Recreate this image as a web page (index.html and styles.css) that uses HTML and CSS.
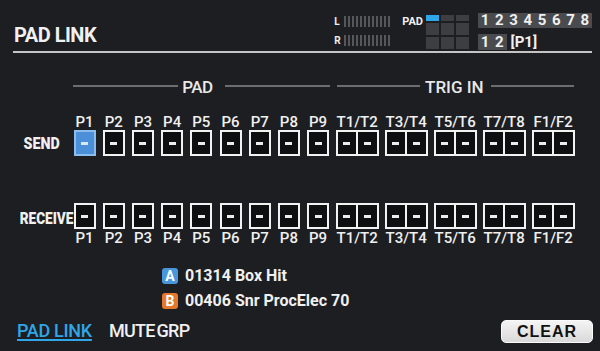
FILE: index.html
```html
<!DOCTYPE html>
<html lang="en">
<head>
    <meta charset="UTF-8">
    <meta name="viewport" content="width=device-width, initial-scale=1.0">
    <title>PAD LINK</title>
    <link rel="stylesheet" href="styles.css">
</head>
<body>
<div class="screen">
    <!-- Title bar with level meters and pad/bank status -->
    <header class="top-bar">
        <h1 class="title">PAD LINK</h1>
        <div class="status">
            <div class="meters">
                <div class="meter"><span>L</span><i class="ticks"></i></div>
                <div class="meter"><span>R</span><i class="ticks"></i></div>
            </div>
            <div class="pad-label">PAD</div>
            <div class="pad-map">
                <b class="on"></b><b></b><b></b>
                <b></b><b></b><b></b>
                <b></b><b></b><b></b>
            </div>
            <div class="banks">
                <div class="bank-row">
                    <span>1</span><span>2</span><span>3</span><span>4</span>
                    <span>5</span><span>6</span><span>7</span><span>8</span>
                </div>
                <div class="bank-sub">
                    <div class="bank-row"><span>1</span><span>2</span></div>
                    <span class="cur">[P1]</span>
                </div>
            </div>
        </div>
    </header>

    <!-- Send / receive link table -->
    <main class="link-table">
        <div class="sections">
            <div class="section pad"><span>PAD</span></div>
            <div class="section trig"><span>TRIG IN</span></div>
        </div>

        <div class="row names top">
            <div></div>
            <div>P1</div><div>P2</div><div>P3</div><div>P4</div><div>P5</div>
            <div>P6</div><div>P7</div><div>P8</div><div>P9</div>
            <div>T1/T2</div><div>T3/T4</div><div>T5/T6</div><div>T7/T8</div><div>F1/F2</div>
        </div>

        <div class="row cells send">
            <div class="row-name"><span>SEND</span></div>
            <div class="box on"><span></span></div>
            <div class="box"><span></span></div>
            <div class="box"><span></span></div>
            <div class="box"><span></span></div>
            <div class="box"><span></span></div>
            <div class="box"><span></span></div>
            <div class="box"><span></span></div>
            <div class="box"><span></span></div>
            <div class="box"><span></span></div>
            <div class="box pair"><span></span><span></span></div>
            <div class="box pair"><span></span><span></span></div>
            <div class="box pair"><span></span><span></span></div>
            <div class="box pair"><span></span><span></span></div>
            <div class="box pair"><span></span><span></span></div>
        </div>

        <div class="row cells receive">
            <div class="row-name"><span>RECEIVE</span></div>
            <div class="box"><span></span></div>
            <div class="box"><span></span></div>
            <div class="box"><span></span></div>
            <div class="box"><span></span></div>
            <div class="box"><span></span></div>
            <div class="box"><span></span></div>
            <div class="box"><span></span></div>
            <div class="box"><span></span></div>
            <div class="box"><span></span></div>
            <div class="box pair"><span></span><span></span></div>
            <div class="box pair"><span></span><span></span></div>
            <div class="box pair"><span></span><span></span></div>
            <div class="box pair"><span></span><span></span></div>
            <div class="box pair"><span></span><span></span></div>
        </div>

        <div class="row names bottom">
            <div></div>
            <div>P1</div><div>P2</div><div>P3</div><div>P4</div><div>P5</div>
            <div>P6</div><div>P7</div><div>P8</div><div>P9</div>
            <div>T1/T2</div><div>T3/T4</div><div>T5/T6</div><div>T7/T8</div><div>F1/F2</div>
        </div>
    </main>

    <!-- Instruments on the current pad -->
    <section class="samples">
        <div class="sample"><span class="tag a">A</span>01314 Box Hit</div>
        <div class="sample"><span class="tag b">B</span>00406 Snr ProcElec 70</div>
    </section>

    <footer class="bottom-bar">
        <span class="tab active">PAD LINK</span>
        <span class="tab">MUTE GRP</span>
        <button class="clear">CLEAR</button>
    </footer>
</div>
</body>
</html>
```

FILE: styles.css
```css
body {
    margin: 0;
    background: #1c1e22;
    font-family: Roboto, "Liberation Sans", sans-serif;
    color: #f0f0f0;
}

.screen {
    width: 600px;
    height: 351px;
    overflow: hidden;
}

/* title bar */
.top-bar {
    display: flex;
    height: 51px;
    margin: 0 8px 0 13px;
    border-bottom: 2px solid #c4c4c4;
}

.title {
    margin: 0;
    padding: 23px 0 0 1px;
    font-size: 20px;
    line-height: 24px;
    font-weight: 700;
    letter-spacing: -0.5px;
}

.status {
    margin-left: auto;
    display: flex;
    align-items: flex-start;
    padding-top: 13px;
}

.meters {
    display: flex;
    flex-direction: column;
    gap: 8px;
    margin-top: 3px;
}

.meter {
    display: flex;
    align-items: center;
    height: 11px;
}

.meter span {
    width: 10px;
    font-size: 10px;
    font-weight: 700;
    line-height: 11px;
}

.ticks {
    width: 46px;
    height: 11px;
    background: repeating-linear-gradient(90deg, #55575b 0 2px, transparent 2px 4px);
}

.pad-label {
    margin: 3px 0 0 12px;
    font-size: 11px;
    font-weight: 700;
    line-height: 12px;
}

.pad-map {
    display: grid;
    grid-template-columns: repeat(3, 13px);
    grid-template-rows: 6px 12px 12px;
    gap: 2px;
    margin: 2px 0 0 3px;
}

.pad-map b {
    background: #3c3e42;
}

.pad-map .on {
    background: #2ea6ea;
}

.banks {
    margin-left: 9px;
}

.bank-row {
    display: flex;
    background: #4a4b4f;
}

.bank-row span {
    width: 14.25px;
    text-align: center;
    font-size: 15px;
    font-weight: 700;
    line-height: 15px;
}

.bank-sub {
    display: flex;
    align-items: center;
    margin-top: 6px;
}

.bank-sub .bank-row span {
    line-height: 16px;
}

.cur {
    margin-left: 4px;
    font-size: 15px;
    font-weight: 700;
    line-height: 16px;
}

/* link table */
.link-table {
    margin: 24px 0 0 13px;
}

.sections {
    display: grid;
    grid-template-columns: 57px 262.8px 245px;
    height: 20px;
}

.section {
    display: flex;
    align-items: center;
    font-size: 17px;
    font-weight: 500;
    line-height: 20px;
    color: #e8e8e8;
}

.section::before, .section::after {
    content: "";
    flex: 1;
    height: 2px;
    margin-bottom: 3px;
    background: #6b6d71;
}

.section.pad {
    grid-column: 2;
    padding: 0 3px;
}

.section.pad span {
    margin: 0 12px 0 4px;
    letter-spacing: -0.5px;
}

.section.trig {
    grid-column: 3;
    padding: 0 4px;
}

.section.trig span {
    margin: 0 7px 0 5px;
}

.row {
    display: grid;
    grid-template-columns: 57px repeat(9, 29.2px) repeat(5, 49px);
    justify-items: center;
}

.names {
    font-size: 15px;
    font-weight: 500;
    line-height: 16px;
    color: #f0f0f0;
}

.names.top {
    margin-top: 17px;
}

.names.bottom {
    line-height: 18px;
}

.cells {
    height: 26px;
}

.cells.receive {
    margin-top: 47px;
}

.row-name {
    justify-self: stretch;
    text-align: center;
    font-size: 17px;
    font-weight: 900;
    line-height: 26px;
}

.row-name span {
    display: inline-block;
    transform: scaleX(.84);
}

.receive .row-name {
    padding-right: 3px;
    line-height: 30px;
}

.receive .row-name span {
    transform: scaleX(.8);
}

.box {
    display: flex;
    width: 22px;
    height: 26px;
    box-sizing: border-box;
    border: 2px solid #f2f2f2;
    background: #0e0f11;
}

.box.pair {
    width: 43px;
}

.box span {
    flex: 1;
    display: flex;
    align-items: center;
    justify-content: center;
}

.box span + span {
    border-left: 2px solid #f2f2f2;
}

.box span::before {
    content: "";
    width: 7px;
    height: 3px;
    background: #ececec;
}

.box.on {
    background: #4a8fd8;
    border-color: #8bbdee;
}

.box.on span::before {
    background: #d6e7f8;
}

/* sample names */
.samples {
    display: flex;
    flex-direction: column;
    gap: 8px;
    margin: 20px 0 0 162px;
}

.sample {
    display: flex;
    align-items: center;
    gap: 7px;
    height: 17px;
    font-size: 16px;
    font-weight: 700;
    line-height: 17px;
}

.tag {
    width: 16px;
    height: 16px;
    border-radius: 3px;
    font-size: 14px;
    line-height: 16px;
    text-align: center;
    color: #fff;
}

.tag.a {
    background: #4897dc;
}

.tag.b {
    background: #e5782c;
}

/* bottom tabs */
.bottom-bar {
    display: flex;
    align-items: flex-start;
    margin-top: 11px;
    padding-left: 17px;
}

.tab {
    margin-top: 1px;
    font-size: 18px;
    line-height: 20px;
    font-weight: 500;
    letter-spacing: -0.3px;
}

.tab.active {
    color: #2fa6e8;
    text-decoration: underline;
    text-decoration-thickness: 2px;
    text-underline-offset: 2px;
}

.tab + .tab {
    margin-left: 17px;
    letter-spacing: -0.7px;
    word-spacing: -2px;
}

.clear {
    width: 92px;
    height: 23px;
    margin: 0 7px 0 auto;
    padding: 0;
    border: 1px solid #fafafa;
    border-radius: 5px;
    background: linear-gradient(#f4f4f4, #d9d9d9);
    font-family: "Liberation Sans", Arial, sans-serif;
    font-size: 16px;
    font-weight: 700;
    letter-spacing: 1px;
    color: #111;
}
```
